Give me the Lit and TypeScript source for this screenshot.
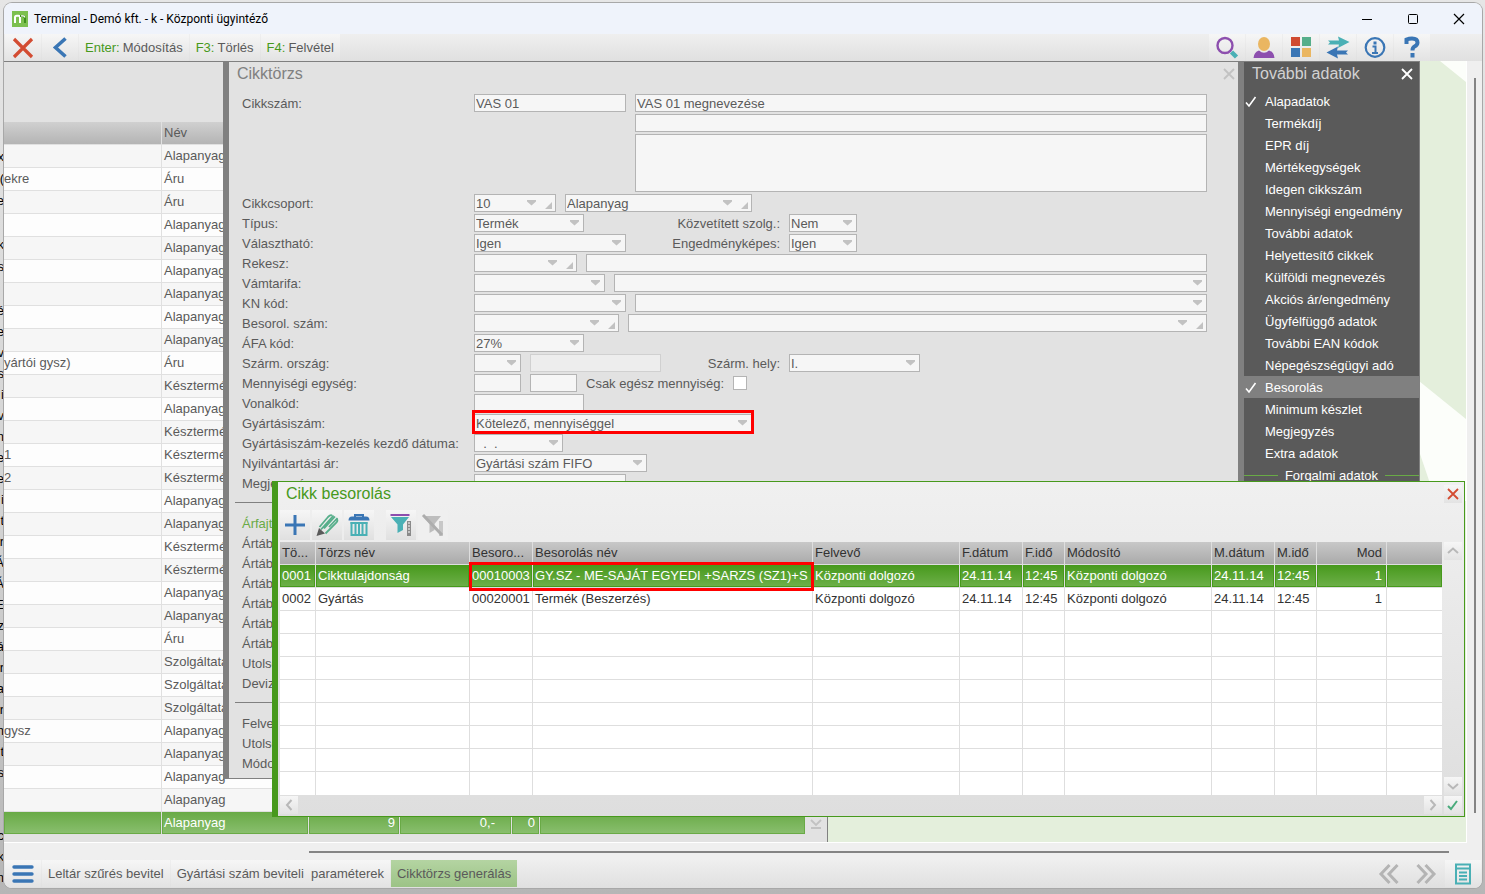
import { LitElement, html, css, svg, nothing } from "lit";
import { customElement } from "lit/decorators.js";
import { classMap } from "lit/directives/class-map.js";

interface Field {
  kind: "text" | "select" | "lookup" | "check";
  width?: number;
  value?: string;
  label?: string;
  labelWidth?: number;
  name: string;
  dim?: boolean;
  marked?: boolean;
}
interface FormRow {
  label: string;
  fields: Field[];
}

const FORM_ROWS: FormRow[] = [
  { label: "Cikkcsoport:", fields: [
    { kind: "lookup", width: 82, value: "10", name: "Cikkcsoport" },
    { kind: "lookup", width: 187, value: "Alapanyag", name: "Cikkcsoport neve" } ] },
  { label: "Típus:", fields: [
    { kind: "select", width: 110, value: "Termék", name: "Típus" },
    { kind: "select", width: 68, value: "Nem", name: "Közvetített", label: "Közvetített szolg.:", labelWidth: 187 } ] },
  { label: "Választható:", fields: [
    { kind: "select", width: 152, value: "Igen", name: "Választható" },
    { kind: "select", width: 68, value: "Igen", name: "Engedményképes", label: "Engedményképes:", labelWidth: 145 } ] },
  { label: "Rekesz:", fields: [
    { kind: "lookup", width: 103, name: "Rekesz" },
    { kind: "text", name: "Rekesz neve" } ] },
  { label: "Vámtarifa:", fields: [
    { kind: "select", width: 131, name: "Vámtarifa" },
    { kind: "select", name: "Vámtarifa neve" } ] },
  { label: "KN kód:", fields: [
    { kind: "select", width: 152, name: "KN kód" },
    { kind: "select", name: "KN kód neve" } ] },
  { label: "Besorol. szám:", fields: [
    { kind: "lookup", width: 145, name: "Besorolási szám" },
    { kind: "lookup", name: "Besorolás neve" } ] },
  { label: "ÁFA kód:", fields: [
    { kind: "select", width: 110, value: "27%", name: "ÁFA kód" } ] },
  { label: "Szárm. ország:", fields: [
    { kind: "select", width: 47, name: "Származási ország" },
    { kind: "text", width: 131, name: "Ország neve", dim: true },
    { kind: "select", width: 131, value: "I.", name: "Származási hely", label: "Szárm. hely:", labelWidth: 110 } ] },
  { label: "Mennyiségi egység:", fields: [
    { kind: "text", width: 47, name: "Mennyiségi egység" },
    { kind: "text", width: 47, name: "Egység neve" },
    { kind: "check", name: "Csak egész", label: "Csak egész mennyiség:", labelWidth: 138 } ] },
  { label: "Vonalkód:", fields: [
    { kind: "text", width: 110, name: "Vonalkód" } ] },
  { label: "Gyártásiszám:", fields: [
    { kind: "select", width: 278, value: "Kötelező, mennyiséggel", name: "Gyártásiszám", marked: true } ] },
  { label: "Gyártásiszám-kezelés kezdő dátuma:", fields: [
    { kind: "select", width: 89, value: "\u00a0\u00a0.\u00a0\u00a0.", name: "Kezdő dátum" } ] },
  { label: "Nyilvántartási ár:", fields: [
    { kind: "select", width: 173, value: "Gyártási szám FIFO", name: "Nyilvántartási ár" } ] },
  { label: "Megjegyzés:", fields: [
    { kind: "text", width: 152, name: "Megjegyzés" } ] },
];

const PRICE_ROWS = ["Ártábla", "Ártábla", "Ártábla", "Ártábla", "Ártábla", "Ártábla", "Utolsó", "Deviza"];
const AUDIT_ROWS = ["Felvevő", "Utolsó", "Módosító"];

const A = "Alapanyag";
const K = "Késztermék";
const S = "Szolgáltatás";
const LIST: [string, string][] = [
  ["", A], ["ekre", "Áru"], ["", "Áru"], ["", A], ["", A], ["", A], ["", A], ["", A], ["", A],
  ["yártói gysz)", "Áru"], ["", K], ["", A], ["", K], ["1", K], ["2", K], ["", A], ["", A],
  ["", K], ["", K], ["", A], ["", A], ["", "Áru"], ["", S], ["", S], ["", S],
  ["gysz", A], ["", A], ["", A], ["", A],
];

const MENU: [string, boolean][] = [
  ["Alapadatok", true], ["Termékdíj", false], ["EPR díj", false], ["Mértékegységek", false],
  ["Idegen cikkszám", false], ["Mennyiségi engedmény", false], ["További adatok", false],
  ["Helyettesítő cikkek", false], ["Külföldi megnevezés", false], ["Akciós ár/engedmény", false],
  ["Ügyfélfüggő adatok", false], ["További EAN kódok", false], ["Népegészségügyi adó", false],
  ["Besorolás", true], ["Minimum készlet", false], ["Megjegyzés", false], ["Extra adatok", false],
];

const HEADS = ["Tö...", "Törzs név", "Besoro...", "Besorolás név", "Felvevő", "F.dátum", "F.idő",
  "Módosító", "M.dátum", "M.idő", "Mod", ""];
const RECORDS = [
  ["0001", "Cikktulajdonság", "00010003", "GY.SZ - ME-SAJÁT EGYEDI +SARZS (SZ1)+S", "Központi dolgozó",
    "24.11.14", "12:45", "Központi dolgozó", "24.11.14", "12:45", "1", ""],
  ["0002", "Gyártás", "00020001", "Termék (Beszerzés)", "Központi dolgozó",
    "24.11.14", "12:45", "Központi dolgozó", "24.11.14", "12:45", "1", ""],
];

const BEHIND = ["x", "(", "e", "", "k", "s", "", "é", "e", "v", "s", "i", "v", "n", "e", "e", "i", "t",
  "r", "Á", "Á", "E", "z", "á", "r", "a", "r", "n", "t", "s", "", "", "c", "k", "n"];

const icon = (w: number, h: number, body: unknown) =>
  html`<svg width=${w} height=${h} viewBox="0 0 ${w} ${h}" fill="none" aria-hidden="true">${body}</svg>`;

const chevron = (d: string) =>
  icon(18, 18, svg`<path d=${d} stroke="#b8b8b8" stroke-width="2"/>`);

const ICONS = {
  logo: icon(16, 16, svg`<rect width="16" height="16" fill="#7cc04f"/>
    <path d="M3 12V6.500Q3 4.800 4.800 4.800H6.500Q8 4.800 8 6.500V12" stroke="#fff" stroke-width="2"/>
    <path d="M8 5H10.500Q13 5 13 7.500V12" stroke="#3f8f1e" stroke-width="2"/>
    <path d="M9 4.800H11Q12.600 4.800 12.800 6.500" stroke="#fff" stroke-width="1.200"/>`),
  close: icon(22, 22, svg`<path d="M2 2L20 20M20 2L2 20" stroke="#d34c32" stroke-width="3.200"/>`),
  back: icon(22, 22, svg`<path d="M16.500 1.500L6.500 10.500L16.500 19.500" stroke="#3a76b5" stroke-width="3.600"/>`),
  search: icon(24, 24, svg`<circle cx="10" cy="9.500" r="7.500" stroke="#8d4fae" stroke-width="2.400"/>
    <path d="M16.500 16L21.500 21" stroke="#4ab0b5" stroke-width="4.500"/>`),
  user: icon(24, 24, svg`<ellipse cx="12" cy="8" rx="6" ry="7" fill="#eab661"/>
    <path d="M1.500 22Q2 16 7 14.500Q12 19 17 14.500Q22 16 22.500 22Z" fill="#8d4fae"/>`),
  tiles: icon(24, 24, svg`<rect x="2" y="1" width="9" height="9" fill="#d04a30"/><rect x="13" y="1" width="9" height="9" fill="#56ae8a"/>
    <rect x="2" y="12" width="9" height="9" fill="#3a76b5"/><rect x="13" y="12" width="9" height="9" fill="#eab661"/>`),
  swap: icon(24, 24, svg`<path d="M2 4.500H13L12 0.500L23.500 6L12 12L13 8.500H2L4 6.500Z" fill="#4ab0b5"/>
    <path d="M22 14.500H11L12 10.500L0.500 16.500L12 22.500L11 18.500H22L20 16.500Z" fill="#3a76b5"/>`),
  info: icon(24, 24, svg`<circle cx="12" cy="11.500" r="9.300" stroke="#3a76b5" stroke-width="2.200"/>
    <rect x="10.500" y="5.500" width="3" height="3" fill="#3a76b5"/>
    <path d="M9.500 10.500H12.500V16.500M9 17H15" stroke="#3a76b5" stroke-width="2"/>`),
  help: icon(24, 24, svg`<path d="M6.500 8V3.500Q9 2.500 12 2.500Q17.500 2.500 17.500 6.500Q17.500 9 14.500 10.500Q12.500 11.500 12.500 14.500" stroke="#3a76b5" stroke-width="4"/>
    <rect x="10.500" y="17" width="4" height="4.500" fill="#3a76b5"/>`),
  plus: icon(24, 24, svg`<path d="M12 2V22M2 12H22" stroke="#3a76b5" stroke-width="3"/>`),
  pencil: icon(24, 24, svg`<path d="M4.500 14L13 4Q15.500 1.500 17 2.500M9 15.500L20 3.500M10.500 20.500L21.500 9.500Q23 7.500 22 6.500M6 16.500L18.500 2.500M14 14L22.500 5" stroke="#56ae8a" stroke-width="1.800"/>
    <path d="M4 15L10 20.500L1.500 23Z" fill="#5a5a5a"/>`),
  trash: icon(24, 24, svg`<path d="M8 4V2H16V4" stroke="#3a76b5" stroke-width="2"/>
    <path d="M1.500 7.500Q1.500 3.500 5 3.500H19Q22.500 3.500 22.500 7.500Z" fill="#3a76b5"/>
    <path d="M4.500 9V22H19.500V9M8.500 9V22M12 9V22M15.500 9V22" stroke="#4ab0b5" stroke-width="2"/><path d="M3.500 10H20.500" stroke="#4ab0b5" stroke-width="2"/>`),
  filter: icon(24, 24, svg`<path d="M1.500 2H20.500" stroke="#8d4fae" stroke-width="2"/><path d="M2 4H20L14 11.500V17L8.500 20V11.500Z" fill="#4ab0b5"/>
    <rect x="18" y="8" width="4" height="15" fill="#8a8a8a"/><path d="M19 10H21M19 13H21M19 16H21M19 19H21" stroke="#fff"/>`),
  unfilter: icon(24, 24, svg`<path d="M2 3H20L13.500 11V17L8.500 20V11Z" fill="#bdbdbd"/>
    <rect x="18" y="8" width="4" height="15" fill="#c8c8c8"/><path d="M2 2L21 22" stroke="#adadad" stroke-width="3"/>`),
  burger: icon(22, 22, svg`<path d="M2 4H20M2 11H20M2 18H20" stroke="#3a76b5" stroke-width="3.400" stroke-linecap="round"/>`),
  prev: icon(24, 24, svg`<path d="M12.500 3L4 12L12.500 21M20.500 3L12 12L20.500 21" stroke="#b4b4b4" stroke-width="3"/>`),
  next: icon(24, 24, svg`<path d="M3.500 3L12 12L3.500 21M11.500 3L20 12L11.500 21" stroke="#b4b4b4" stroke-width="3"/>`),
  sheet: icon(24, 24, svg`<rect x="5" y="2.500" width="14" height="19" stroke="#4ab0b5" stroke-width="2"/>
    <path d="M5 6.500H19M8 10.500H16M8 14H16M8 17.500H16" stroke="#4ab0b5" stroke-width="1.800"/>`),
  check: icon(18, 18, svg`<path d="M4 10L7 13L13 5" stroke="#4aab7c" stroke-width="2"/>`),
  tick: icon(14, 14, svg`<path d="M2 7.500L5 11L11.500 2" stroke="#fff" stroke-width="1.600"/>`),
};

const smallX = (color: string) =>
  icon(18, 18, svg`<path d="M4 4L14 14M14 4L4 14" stroke=${color} stroke-width="1.800"/>`);

@customElement("app-root")
export class AppRoot extends LitElement {
  static styles = css`
    :host { display: flex; box-sizing: border-box; position: relative; height: 100vh; padding: 3px 3px 6px 4px; overflow: hidden;
      background: linear-gradient(#e6e6e6, #d2d2d2 60%, #b6b6b6); font: 13px/20px "Liberation Sans", Arial, sans-serif; color: #5a5a5a; }
    *, *::before, *::after { box-sizing: border-box; }
    svg { display: block; flex: none; }
    button { font: inherit; color: inherit; border: 0; padding: 0; background: none; display: flex; align-items: center; justify-content: center; white-space: pre; }
    h1, h2 { margin: 0; font-weight: normal; }
    .behind { position: absolute; left: 0; top: 146px; width: 4px; overflow: hidden; color: #000; line-height: 21px; display: flex; flex-direction: column; align-items: flex-end; }
    .behind span { height: 21px; }
    .behind span:nth-child(-n + 7) { height: 22px; }
    .frame { flex: 1; min-width: 0; display: flex; flex-direction: column; border-radius: 8px; overflow: hidden; position: relative; background: #efefef; box-shadow: 0 0 0 1px #a8a8a8; }
    .titlebar { height: 31px; display: flex; align-items: center; background: #eff3fb; padding-left: 8px; gap: 6px; color: #000; }
    .titlebar h1 { flex: 1; font: 12px/16px Roboto, sans-serif; }
    .system { display: flex; padding-top: 0; }
    .sys { width: 46px; height: 30px; }
    .system .sys:last-child { width: 46px; }
    .toolbar { height: 27px; display: flex; flex: none; background: linear-gradient(#efefef, #e0e0e0); padding: 0 52px 0 1px; gap: 1px; }
    .tool { background: linear-gradient(#f6f6f6, #e3e3e3); padding: 0 6px; height: 27px; gap: 3px; }
    .tool.square { width: 36px; padding: 0; }
    .tool b { font-weight: normal; color: #47991c; }
    .spacer { flex: 1; }
    .body { flex: 1; min-height: 0; display: flex; flex-direction: column; padding-right: 15px; position: relative; }
    .space { flex: 1; min-height: 0; position: relative; overflow: hidden; background: #e4efdc; border-right: 1px solid #fff; border-bottom: 1px solid #fff; }
    .wedges { position: absolute; right: 0; top: 0; }
    .vbar { position: absolute; right: 6px; top: 17px; bottom: 46px; width: 2px; background: #848484; }
    .hbar { height: 2px; margin: 8px 18px 6px 305px; background: #848484; flex: none; }
    .status { height: 29px; flex: none; display: flex; gap: 1px; padding: 1px 1px 1px 1px; background: linear-gradient(#efefef, #e0e0e0); }
    .status .tool.current { background: linear-gradient(#b4d4a2, #9cc386); }
    .status .tool.plain { background: none; }

    .list { position: absolute; left: 0; top: 0; bottom: 0; width: 824px; background: #e2e2e2; border-top: 1px solid #808080; border-right: 1px solid #808080; padding-top: 60px; display: flex; align-items: flex-end; overflow: hidden; }
    .list .grid { width: 801px; align-self: flex-start; }
    .ends { width: 22px; padding-bottom: 8px; }
    .grid { border-collapse: separate; border-spacing: 0; table-layout: fixed; }
    .grid th, .grid td { height: 23px; padding: 0 2px; text-align: left; font-weight: normal; line-height: 22px; white-space: nowrap; overflow: hidden; border-right: 1px solid #e0e0e0; border-bottom: 1px solid #e0e0e0; }
    .grid th:last-child, .grid td:last-child { border-right: 0; }
    .list th { background: linear-gradient(#d0d0d0, #b4b4b4); }
    .list td { background: #fdfdfd; }
    .list tr:nth-child(odd) td { background: #f6f6f6; }
    .list td:first-child { padding: 0; }
    .list tr.on td { background: linear-gradient(#69aa46, #8abf6f); color: #fff; box-shadow: inset 0 0 0 1px #69aa46; }
    .grid .num { text-align: right; padding-right: 4px; }
    .list .num.wide { padding-right: 16px; }

    .card { position: absolute; left: 219px; right: 228px; top: 0; background: #e2e2e2; border: solid #808080; border-width: 1px 0 1px 6px; display: flex; flex-direction: column; }
    .head { display: flex; justify-content: space-between; padding-left: 8px; height: 24px; align-items: center; }
    .head h2 { font-size: 16px; line-height: 24px; color: #808080; }
    .form { padding: 8px 31px 4px 13px; display: flex; flex-direction: column; }
    .row { display: flex; gap: 9px; height: 20px; }
    .row > label:first-child, .row > .cap { width: 223px; flex: none; line-height: 19px; white-space: nowrap; }
    .side { text-align: right; line-height: 19px; white-space: nowrap; flex: none; }
    .box { position: relative; height: 18px; display: flex; min-width: 0; }
    .box.fill { flex: 1; }
    input, select, textarea { font: inherit; color: inherit; margin: 0; border: 1px solid #b4b4b4; border-radius: 0; background: #f6f6f6; padding: 0 1px; appearance: none; resize: none; outline: none; }
    .box input, .box select { width: 100%; height: 18px; line-height: 16px; }
    .box select { padding-top: 1px; }
    .box .mark { position: absolute; right: 4px; top: 5px; pointer-events: none; }
    .box.dim input { border-color: #d0d0d0; background: #ededed; }
    .box.marked::after { content: ""; position: absolute; inset: -4px -2px -2px; border: 3px solid #f00; pointer-events: none; }
    .tickbox { width: 14px; height: 14px; margin-top: 2px; background: #fff; }
    .first { display: flex; gap: 9px; height: 100px; }
    .first > label { width: 223px; flex: none; line-height: 19px; }
    .names { flex: 1; display: flex; flex-direction: column; gap: 2px; }
    .names textarea { height: 58px; }
    .rule { height: 1px; margin: 8px 0 11px -7px; background: #808080; }
    .green { color: #69aa46; }

    .menu { position: absolute; right: 46px; top: 0; width: 182px; background: #5a5a5a; border: solid #808080; border-width: 1px 1px 1px 6px; color: #fff; padding-bottom: 40px; }
    .menu .head { height: 28px; padding-bottom: 4px; }
    .menu .head button { width: 24px; }
    .menu h2 { color: #d2d2d2; }
    .menu .item { width: 100%; height: 22px; padding-top: 2px; justify-content: flex-start; }
    .menu .item.on { background: #808080; }
    .menu .item span { width: 21px; }
    .sep { display: flex; align-items: center; height: 22px; gap: 7px; padding-top: 1px; white-space: nowrap; }
    .sep::before, .sep::after { content: ""; flex: 1; height: 1px; background: #69aa46; }

    .dialog { position: absolute; left: 268px; right: 1px; top: 420px; background: linear-gradient(#f0f0f0, #dedede); border: solid #47991c; border-width: 1px 1px 1px 6px; padding: 2px; color: #323232; }
    .dialog .head { padding-left: 6px; height: 20px; }
    .dialog h2 { color: #47991c; }
    .dialog .head button, .mini { width: 18px; height: 18px; background: linear-gradient(#f6f6f6, #e3e3e3); }
    .actions { display: flex; gap: 2px; padding: 6px 0 2px; }
    .actions button { width: 30px; height: 30px; background: linear-gradient(#f6f6f6, #e0e0e0); }
    .actions .gap { margin-left: 10px; }
    .actions .off { background: #efefef; }
    .pane { display: flex; gap: 2px; position: relative; }
    .pane .grid { flex: 1; width: 100%; background: #fff; }
    .pane th { background: linear-gradient(#c8c8c8, #aaaaaa); }
    .pane td, .pane th { border-color: #dedede; }
    .pane tr:last-child td { border-bottom: 0; }
    .pane tr.on td { background: linear-gradient(#47991c, #6eb04a); color: #fff; box-shadow: inset 0 0 0 1px #47991c; }
    .vscroll { display: flex; flex-direction: column; justify-content: space-between; width: 18px; }
    .hscroll { display: flex; gap: 2px; padding-top: 1px; }
    .hscroll .mini:first-child { margin-right: auto; }
    .pane thead th { border-bottom-color: #dedede; }
    .outline { position: absolute; left: 189px; top: 20px; width: 345px; height: 29px; border: 3px solid #f00; pointer-events: none; }
  `;

  private control(f: Field, id: string) {
    if (f.kind === "check") {
      return html`<input class="tickbox" type="checkbox" id=${id}>`;
    }
    const cls = classMap({ box: true, fill: !f.width, dim: !!f.dim, marked: !!f.marked });
    const lookup = f.kind === "lookup";
    return html`<span class=${cls} style=${f.width ? `width:${f.width}px` : nothing}>
      ${f.kind === "text"
        ? html`<input type="text" id=${id} aria-label=${f.name} .value=${f.value ?? ""}>`
        : html`<select id=${id} aria-label=${f.name}><option>${f.value ?? ""}</option></select>
          <svg class="mark" width="28" height="10" viewBox="0 0 28 10" aria-hidden="true">
            ${lookup
              ? svg`<path d="M3 1H12V2.500L7.500 6.500L3 2.500Z M28 3V10H21Z" fill="#c2c2c2"/>`
              : svg`<path d="M18 1H27V2.500L22.500 6.500L18 2.500Z" fill="#c2c2c2"/>`}
          </svg>`}
    </span>`;
  }

  private formRow(r: FormRow, i: number) {
    return html`<div class="row">
      <label for="f${i}-0">${r.label}</label>
      ${r.fields.map((f, j) => html`
        ${f.label ? html`<label class="side" for="f${i}-${j}" style="width:${f.labelWidth}px">${f.label}</label>` : nothing}
        ${this.control(f, `f${i}-${j}`)}`)}
    </div>`;
  }

  private list() {
    return html`<section class="list">
      <table class="grid">
        <colgroup><col style="width:158px"><col style="width:147px"><col style="width:91px"><col style="width:112px"><col style="width:28px"><col></colgroup>
        <thead><tr><th></th><th>Név</th><th></th><th></th><th></th><th></th></tr></thead>
        <tbody>
          ${LIST.map(([a, b]) => html`<tr><td>${a}</td><td>${b}</td><td></td><td></td><td></td><td></td></tr>`)}
          <tr class="on"><td></td><td>Alapanyag</td><td class="num">9</td><td class="num wide">0,-</td><td class="num">0</td><td></td></tr>
        </tbody>
      </table>
      <div class="ends">${icon(22, 18, svg`<path d="M6 4L11 9L16 4M6 12H16" stroke="#c2c2c2" stroke-width="1.800"/>`)}</div>
    </section>`;
  }

  private card() {
    return html`<section class="card">
      <div class="head"><h2>Cikktörzs</h2><button aria-label="Cikktörzs bezárása">${smallX("#c2c2c2")}</button></div>
      <div class="form">
        <div class="first">
          <label for="code">Cikkszám:</label>
          <span class="box" style="width:152px"><input id="code" .value=${"VAS 01"}></span>
          <div class="names">
            <span class="box"><input aria-label="Megnevezés" .value=${"VAS 01 megnevezése"}></span>
            <span class="box"><input aria-label="Megnevezés 2"></span>
            <textarea aria-label="Leírás"></textarea>
          </div>
        </div>
        ${FORM_ROWS.map((r, i) => this.formRow(r, i))}
        <div class="rule"></div>
        <div class="row green"><span class="cap">Árfajta</span></div>
        ${PRICE_ROWS.map((t) => html`<div class="row"><span class="cap">${t}</span></div>`)}
        <div class="rule"></div>
        ${AUDIT_ROWS.map((t) => html`<div class="row"><span class="cap">${t}</span></div>`)}
      </div>
    </section>`;
  }

  private menu() {
    return html`<nav class="menu">
      <div class="head"><h2>További adatok</h2><button aria-label="Menü bezárása">${smallX("#ffffff")}</button></div>
      ${MENU.map(([t, on]) => html`<button class=${classMap({ item: true, on: t === "Besorolás" })}><span>${on ? ICONS.tick : nothing}</span>${t}</button>`)}
      <div class="sep">Forgalmi adatok</div>
    </nav>`;
  }

  private dialog() {
    const widths = [36, 154, 63, 280, 147, 63, 42, 147, 63, 42, 70];
    const numCls = (i: number) => (i === 10 ? "num" : nothing);
    return html`<section class="dialog" role="dialog" aria-label="Cikk besorolás">
      <div class="head"><h2>Cikk besorolás</h2><button aria-label="Bezárás">${smallX("#d34c32")}</button></div>
      <div class="actions">
        <button aria-label="Új">${ICONS.plus}</button>
        <button aria-label="Módosítás">${ICONS.pencil}</button>
        <button aria-label="Törlés">${ICONS.trash}</button>
        <button class="gap" aria-label="Szűrés">${ICONS.filter}</button>
        <button class="off" aria-label="Szűrés törlése">${ICONS.unfilter}</button>
      </div>
      <div class="pane">
        <table class="grid">
          <colgroup>${widths.map((w) => html`<col style="width:${w}px">`)}<col></colgroup>
          <thead><tr>${HEADS.map((h, i) => html`<th class=${numCls(i)}>${h}</th>`)}</tr></thead>
          <tbody>
            ${RECORDS.map((r, n) => html`<tr class=${n === 0 ? "on" : nothing}>${r.map((c, i) => html`<td class=${numCls(i)}>${c}</td>`)}</tr>`)}
            ${Array.from({ length: 8 }, () => html`<tr>${HEADS.map(() => html`<td></td>`)}</tr>`)}
          </tbody>
        </table>
        <div class="vscroll">
          <button class="mini" aria-label="Fel">${chevron("M4 11L9 6.500L14 11")}</button>
          <button class="mini" aria-label="Le">${chevron("M4 7L9 11.500L14 7")}</button>
        </div>
        <div class="outline"></div>
      </div>
      <div class="hscroll">
        <button class="mini" aria-label="Balra">${chevron("M11.500 4L7 9L11.500 14")}</button>
        <button class="mini" aria-label="Jobbra">${chevron("M6.500 4L11 9L6.500 14")}</button>
        <button class="mini" aria-label="Rendben">${ICONS.check}</button>
      </div>
    </section>`;
  }

  render() {
    return html`
      <div class="behind" aria-hidden="true">${BEHIND.map((t) => html`<span>${t}</span>`)}</div>
      <main class="frame">
        <header class="titlebar">
          ${ICONS.logo}<h1>Terminal - Demó kft. - k - Központi ügyintéző</h1>
          <div class="system">
            <button class="sys" aria-label="Kis méret">${icon(12, 12, svg`<path d="M1 6.500H11" stroke="#000"/>`)}</button>
            <button class="sys" aria-label="Teljes méret">${icon(12, 12, svg`<rect x="1.500" y="1.500" width="9" height="9" rx="1" stroke="#000"/>`)}</button>
            <button class="sys" aria-label="Bezárás">${icon(12, 12, svg`<path d="M1 1L11 11M11 1L1 11" stroke="#000" stroke-width="1.200"/>`)}</button>
          </div>
        </header>
        <div class="toolbar">
          <button class="tool square" aria-label="Kilépés">${ICONS.close}</button>
          <button class="tool square" aria-label="Vissza">${ICONS.back}</button>
          <button class="tool"><b>Enter:</b><span>Módosítás</span></button>
          <button class="tool"><b>F3:</b><span>Törlés</span></button>
          <button class="tool"><b>F4:</b><span>Felvétel</span></button>
          <span class="spacer"></span>
          <button class="tool square" aria-label="Keresés">${ICONS.search}</button>
          <button class="tool square" aria-label="Felhasználó">${ICONS.user}</button>
          <button class="tool square" aria-label="Modulok">${ICONS.tiles}</button>
          <button class="tool square" aria-label="Váltás">${ICONS.swap}</button>
          <button class="tool square" aria-label="Információ">${ICONS.info}</button>
          <button class="tool square" aria-label="Súgó">${ICONS.help}</button>
        </div>
        <div class="body">
          <div class="space">
            <svg class="wedges" width="60" height="440" viewBox="0 0 60 440" aria-hidden="true">
              <path d="M34 0H60V21Z M13 320L60 358V440H30L13 390Z" fill="#fcfefa"/>
            </svg>
            ${this.list()}${this.card()}${this.menu()}${this.dialog()}
          </div>
          <div class="hbar"></div>
          <div class="vbar"></div>
        </div>
        <footer class="status">
          <button class="tool square" aria-label="Menü">${ICONS.burger}</button>
          <button class="tool">Leltár szűrés bevitel</button>
          <button class="tool">Gyártási szám beviteli  paraméterek</button>
          <button class="tool current">Cikktörzs generálás</button>
          <span class="spacer"></span>
          <button class="tool square plain" aria-label="Előző">${ICONS.prev}</button>
          <button class="tool square plain" aria-label="Következő">${ICONS.next}</button>
          <button class="tool square" aria-label="Jegyzetek">${ICONS.sheet}</button>
        </footer>
      </main>`;
  }
}
